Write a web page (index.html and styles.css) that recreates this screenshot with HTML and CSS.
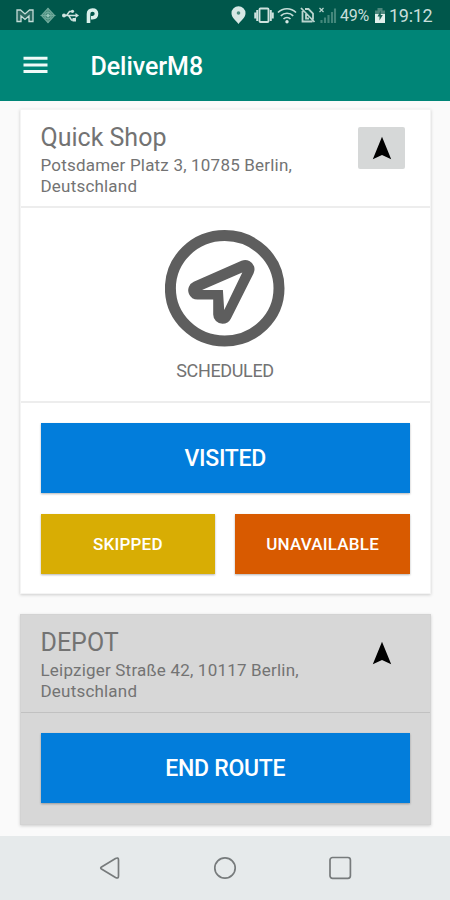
FILE: index.html
```html
<!DOCTYPE html>
<html lang="en">
<head>
<meta charset="utf-8">
<title>DeliverM8</title>
<link rel="stylesheet" href="styles.css">
</head>
<body>
<div class="screen">
  <div class="status">
    <div class="group notifications">
      <svg width="18" height="30" viewBox="16 0 18 30"><path d="M17 10h3.500l4.500 4 4.500-4H33v11.500h-4V16l-4 3.500-4-3.500v5.500h-4z" fill="#28695f" stroke="#c4dcd7" stroke-width="1.300"/></svg>
      <svg width="16" height="30" viewBox="39.500 0 16 30"><g fill="none" stroke="#6fa99b"><path d="M47.500 8.500l6.500 7-6.500 7-6.500-7z" fill="#3e8272" stroke-width="1.200"/><circle cx="47.500" cy="15.500" r="3.200" stroke-width="1.300"/><path d="M47.500 8v15M40 15.500h15"/></g><circle cx="47.500" cy="15.500" r="1.600" fill="#9bc8bc"/></svg>
      <svg width="18" height="30" viewBox="61.500 0 18 30"><g fill="none" stroke="#cfe3df" stroke-width="1.500"><path d="M63 15.500h13M66 15.500l3-4h3M68 15.500l3 4.500h3"/></g><g fill="#cfe3df"><circle cx="63.500" cy="15.500" r="2"/><path d="M75 13l3.500 2.500L75 18z"/><circle cx="72" cy="11.300" r="1.600"/><path d="M72 18h3.500v3.500H72z"/></g></svg>
      <svg width="14" height="30" viewBox="86 0 14 30"><path d="M88.500 23V14q0-4 4-4t4 3.800-4 3.900h-1.500" fill="none" stroke="#d9f0eb" stroke-width="3.600"/></svg>
    </div>
    <div class="group system">
      <svg width="15" height="30" viewBox="230.500 0 15 30"><path d="M238 24c-3-4-7-6.500-7-10.700a7 7 0 0 1 14 0c0 4.200-4 6.700-7 10.700z" fill="#d7e8e5"/><circle cx="238" cy="13" r="1.800" fill="#4b8c80"/></svg>
      <svg width="20" height="30" viewBox="253.500 0 20 30"><g fill="none" stroke="#cfe2de" stroke-width="1.900"><rect x="259" y="8.500" width="9" height="13.500" rx="1"/><path d="M256.700 10v11M254.700 12.500v6M270.300 10v11M272.300 12.500v6"/></g></svg>
      <svg width="20" height="30" viewBox="276.500 0 20 30"><g fill="none" stroke="#c5ddd8" stroke-width="1.700"><path d="M277.500 12.500c5-5 13-5 18 0M280.300 15.800c3.500-3.400 9-3.400 12.400 0M283 19c2-2 5-2 7 0"/></g><circle cx="286.500" cy="21.700" r="1.700" fill="#d7e8e5"/></svg>
      <svg width="16" height="30" viewBox="300 0 16 30"><path d="M302.500 11v10.500h10M305 9h3.500l4.500 4.500v6M306 14v4.500h3M301 8l13.500 14" fill="none" stroke="#b9d4ce" stroke-width="1.800"/></svg>
      <svg width="18" height="30" viewBox="319 0 18 30"><path d="M319.500 8l4 4m0-4l-4 4" stroke="#b9d4ce" stroke-width="1.200"/><path d="M321.500 23v-3M325 23v-5.500M328.500 23v-8M332 23V12M335 23V8.500" stroke="#43877b" stroke-width="2.100"/></svg>
      <span class="percent">49%</span>
      <svg width="12" height="30" viewBox="374 0 12 30"><path d="M375 10.500h2.500V8h5v2.500h2.500V15h-10z" fill="#4c877c"/><path d="M375 14h10v9h-10z" fill="#e0efeb"/><path d="M380.800 10.500l-3.300 6h2v4l3.300-5.500h-2z" fill="#166457"/></svg>
      <span class="clock">19:12</span>
    </div>
  </div>
  <header class="appbar">
    <svg width="25" height="18" viewBox="0 0 25 18"><path d="M.5 2.200h24M.5 8.900h24M.5 15.600h24" stroke="#f0faf8" stroke-width="3"/></svg>
    <h1>DeliverM8</h1>
  </header>
  <main>
    <section class="card">
      <div class="stop">
        <div class="place">
          <h2>Quick Shop</h2>
          <p>Potsdamer Platz 3, 10785 Berlin,<br>Deutschland</p>
        </div>
        <button class="navigate" aria-label="Navigate"><svg width="20" height="24" viewBox="0 0 20 24"><path d="M10 .7L19.200 23.300 10 19 .8 23.300z"/></svg></button>
      </div>
      <div class="state">
        <svg width="120" height="118" viewBox="165.500 229 120 118"><ellipse cx="225.200" cy="288.300" rx="54.300" ry="52.700" fill="none" stroke="#5e5e5e" stroke-width="11"/><path d="M245.700 269.300L198 290.300H223V314.500z" fill="#5e5e5e" stroke="#5e5e5e" stroke-width="18.600" stroke-linejoin="round"/><path d="M242.800 272.500L202.500 290H223.400L224.700 310z" fill="#fff"/></svg>
        <span>SCHEDULED</span>
      </div>
      <div class="actions">
        <button class="button primary visited">VISITED</button>
        <div class="pair">
          <button class="button skipped">SKIPPED</button>
          <button class="button unavailable">UNAVAILABLE</button>
        </div>
      </div>
    </section>
    <section class="card depot">
      <div class="stop">
        <div class="place">
          <h2>DEPOT</h2>
          <p>Leipziger Straße 42, 10117 Berlin,<br>Deutschland</p>
        </div>
        <button class="navigate" aria-label="Navigate"><svg width="20" height="24" viewBox="0 0 20 24"><path d="M10 .7L19.200 23.300 10 19 .8 23.300z"/></svg></button>
      </div>
      <div class="actions">
        <button class="button primary end">END ROUTE</button>
      </div>
    </section>
  </main>
  <nav class="navbar">
    <svg width="24" height="24" viewBox="0 0 24 24"><path d="M3.500 11L17.500 2.500q3-1.500 3 1.500v16q0 3-3 1.500L3.500 13q-1.500-1 0-2z"/></svg>
    <svg width="24" height="24" viewBox="0 0 24 24"><circle cx="12" cy="12" r="10.200"/></svg>
    <svg width="24" height="24" viewBox="0 0 24 24"><rect x="2" y="1.500" width="20.400" height="20.800" rx="2.500"/></svg>
  </nav>
</div>
</body>
</html>
```
FILE: styles.css
```css
* { box-sizing: border-box; margin: 0; }
body { font-family: Roboto, sans-serif; background: #fafafa; color: #737373; }
svg { display: block; flex: none; }
button { border: 0; padding: 0; font-family: inherit; }

.screen { width: 450px; height: 900px; display: flex; flex-direction: column; overflow: hidden; }

.status { height: 30px; flex: none; background: #00574b; display: flex; justify-content: space-between; padding: 0 18px 0 16px; color: #c9dfdb; }
.group { display: flex; align-items: center; }
.notifications { gap: 6px; }
.system { gap: 3px; }
.system span { white-space: nowrap; line-height: 30px; padding-top: 2px; }
.percent { width: 31px; font-size: 16px; letter-spacing: -.3px; }
.clock { width: 43px; font-size: 18px; letter-spacing: -.3px; }
.system svg:first-child { margin-right: 5px; }

.appbar { height: 70.500px; flex: none; background: #008577; display: flex; align-items: center; padding-left: 23px; gap: 42.500px; }
.appbar svg { margin-bottom: 1px; }
.appbar h1 { font-size: 25px; line-height: 30px; font-weight: 500; color: #fff; padding-top: 3px; letter-spacing: -.05px; }

main { flex: 1; padding: 8.500px 19px 0 20px; display: flex; flex-direction: column; gap: 20px; background: #fafafa; }
.card { background: #fff; border: 1px solid #f4f4f4; box-shadow: 0 1px 3px rgba(0,0,0,.18); }
.stop { height: 98px; padding: 14px 25px 0 19.500px; display: flex; justify-content: space-between; align-items: flex-start; border-bottom: 2px solid #ededed; }
.stop h2 { font-size: 25px; line-height: 28px; font-weight: 400; }
.stop p { font-size: 17px; line-height: 20.500px; margin-top: 3px; white-space: nowrap; letter-spacing: .2px; }
.navigate { width: 47px; height: 42px; margin-top: 3px; border-radius: 2px; background: #d6d8d8; display: flex; align-items: center; justify-content: center; }

.state { height: 195px; padding: 21px 1px 0 0; display: flex; flex-direction: column; align-items: center; border-bottom: 2px solid #ededed; }
.state span { font-size: 18px; line-height: 22px; margin-top: 13px; letter-spacing: -.35px; }

.actions { padding: 20px 20px 19px 19.500px; display: flex; flex-direction: column; gap: 21px; }
.pair { display: grid; grid-template-columns: 1fr 1fr; gap: 20px; }
.button { height: 60px; color: #fff; font-size: 17px; font-weight: 500; letter-spacing: .2px; box-shadow: 0 1px 2px rgba(0,0,0,.3); }
.primary { height: 70px; font-size: 23px; letter-spacing: -.25px; background: #027ddb; }
.skipped { background: #d8ad04; }
.unavailable { background: #d85a00; }

.depot { background: #d7d7d7; border-color: #d3d3d3; }
.depot .stop { border-bottom: 1px solid #c1c1c1; }
.depot .navigate { background: transparent; }
.depot .actions { padding-bottom: 21px; }

.navbar { height: 64px; flex: none; background: #e6eaeb; display: flex; justify-content: center; gap: 91px; align-items: center; }
.navbar svg { fill: none; stroke: #777b7c; stroke-width: 1.700; }
```
